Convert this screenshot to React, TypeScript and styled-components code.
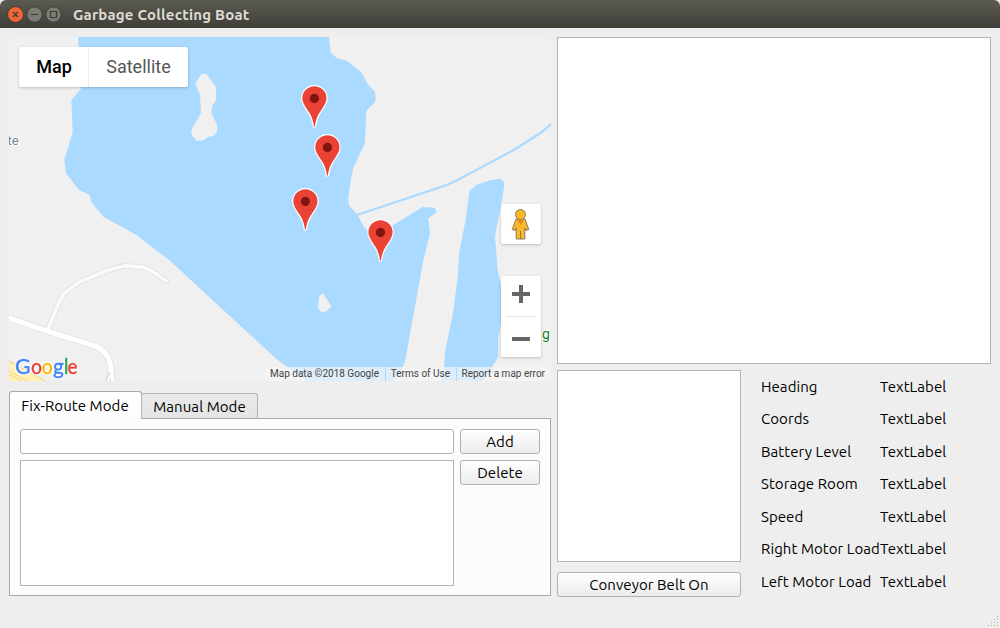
import React from 'react';
import styled, { createGlobalStyle } from 'styled-components';

const UI = '"Ubuntu", "Noto Sans", "Open Sans", sans-serif';

const Global = createGlobalStyle`
  * { box-sizing: border-box; }
  html, body { margin: 0; padding: 0; background: #eeeeee; }
  body { font-family: ${UI}; color: #000; overflow: hidden; }
`;

const Window = styled.div`
  position: relative;
  display: flex;
  flex-direction: column;
  width: 1000px;
  height: 628px;
  background: #eeeeee;
`;

const TitleBar = styled.header`
  flex: none;
  display: flex;
  align-items: center;
  height: 28px;
  padding-left: 7px;
  background: linear-gradient(#5b5a52, #3f3e39);
  border-radius: 6px 6px 0 0;
`;

const WindowButtons = styled.svg`
  display: block;
  width: 56px;
  height: 28px;
`;

const Title = styled.h1`
  margin: 0 0 0 10px;
  padding-top: 2px;
  font-size: 15px;
  line-height: 20px;
  font-weight: 700;
  letter-spacing: 0.2px;
  white-space: nowrap;
  color: #dfdbd2;
`;

const Body = styled.main`
  display: flex;
  gap: 6px;
  padding: 9px 9px 0;
`;

const LeftColumn = styled.section`
  width: 542px;
  display: flex;
  flex-direction: column;
`;

const RightColumn = styled.section`
  width: 434px;
  display: flex;
  flex-direction: column;
  gap: 6px;
`;

const MapFrame = styled.div`
  position: relative;
  width: 542px;
  height: 344px;
  overflow: hidden;
  font-family: Roboto, sans-serif;
`;

const MapDrawing = styled.svg`
  display: block;
  width: 542px;
  height: 344px;
`;

const MapTypes = styled.div`
  position: absolute;
  left: 10px;
  top: 10px;
  display: flex;
  height: 40px;
  background: #fff;
  border-radius: 2px;
  box-shadow: 0 1px 3px rgba(0, 0, 0, 0.22);
`;

const MapType = styled.button<{ $active?: boolean }>`
  width: ${(p) => (p.$active ? 69 : 100)}px;
  padding: ${(p) => (p.$active ? '0 0 1px 1px' : '0 0 1px')};
  border: 0;
  border-left: ${(p) => (p.$active ? '0' : '1px solid #ededed')};
  background: none;
  font: ${(p) => (p.$active ? 500 : 400)} 18px Roboto, sans-serif;
  color: ${(p) => (p.$active ? '#000' : '#565656')};
`;

const MapControls = styled.div`
  position: absolute;
  right: 10px;
  top: 167px;
  display: flex;
  flex-direction: column;
  gap: 32px;
`;

const ControlCard = styled.div<{ $height: number }>`
  width: 40px;
  height: ${(p) => p.$height}px;
  background: #fff;
  border-radius: 2px;
  box-shadow: 0 1px 3px rgba(0, 0, 0, 0.22);

  svg { display: block; }
`;

const Attribution = styled.div`
  position: absolute;
  right: 0;
  bottom: 0;
  display: flex;
  height: 14px;
  font-size: 10px;
  line-height: 14px;
  color: #444;
`;

const Credit = styled.span`
  padding: 0 6px 0 5px;
  background: rgba(245, 245, 245, 0.7);
  white-space: nowrap;

  & + & { margin-left: 1px; }
  &:nth-child(2) { padding: 0 5.5px 0 4.9px; }
`;

const TabBar = styled.div`
  position: relative;
  z-index: 1;
  display: flex;
  align-items: flex-end;
  height: 28px;
  margin: 10px 0 -1px;
`;

const Tab = styled.button<{ $active?: boolean }>`
  width: ${(p) => (p.$active ? 133 : 117)}px;
  height: ${(p) => (p.$active ? 28 : 26)}px;
  margin-left: ${(p) => (p.$active ? 0 : -1)}px;
  padding: ${(p) => (p.$active ? '1px 1px 0 0' : '2px 0 0')};
  border: 1px solid ${(p) => (p.$active ? '#a8a8a8' : '#b5b5b5')};
  border-bottom-color: ${(p) => (p.$active ? '#fcfcfc' : '#a8a8a8')};
  border-radius: 3px 3px 0 0;
  background: ${(p) => (p.$active ? 'linear-gradient(#fff, #fcfcfc)' : 'linear-gradient(#e9e9e9, #e4e4e4)')};
  font: 15px/22px ${UI};
  letter-spacing: 0.07px;
  white-space: nowrap;
  color: #000;
`;

const TabPanel = styled.div`
  display: flex;
  gap: 6px;
  height: 178px;
  padding: 10px 10px 9px;
  border: 1px solid #a8a8a8;
  background: #fcfcfc;
`;

const Stack = styled.div<{ $width: number; $gap?: number }>`
  flex: none;
  display: flex;
  flex-direction: column;
  gap: ${(p) => p.$gap ?? 6}px;
  width: ${(p) => p.$width}px;
`;

const RouteInput = styled.input`
  flex: none;
  height: 25px;
  border: 1px solid #b0b0b0;
  border-radius: 3px;
  background: #fff;
  outline: 0;
`;

const ListBox = styled.div<{ $height: number }>`
  flex: none;
  height: ${(p) => p.$height}px;
  border: 1px solid #b5b5b5;
  background: #fff;
`;

const PushButton = styled.button`
  height: 25px;
  padding: 1px 0 0;
  border: 1px solid #b0b0b0;
  border-radius: 3px;
  background: linear-gradient(#fefefe, #ececec);
  font: 15px/22px ${UI};
  letter-spacing: 0.06px;
  white-space: nowrap;
  color: #000;
`;

const StatusRow = styled.div`
  display: flex;
  gap: 20px;
`;

const StatusGrid = styled.dl`
  display: grid;
  grid-template-columns: 119px 80px;
  grid-auto-rows: 32.5px;
  margin: -0.25px 0 0;
  font-size: 15px;
  line-height: 33px;
  letter-spacing: 0.06px;
  white-space: nowrap;

  dd { margin: 0; }
`;

const SizeGrip = styled.svg`
  position: absolute;
  right: 1px;
  bottom: 1px;
  width: 12px;
  height: 12px;
`;

const LogoText = styled.g`
  font: 500 21px Lato, sans-serif;
  filter: drop-shadow(0 0 0.8px #fff) drop-shadow(0 0 0.8px #fff);
`;

const markers = [
  { x: 314.4, y: 98.4 },
  { x: 327.4, y: 147.4 },
  { x: 305.4, y: 201.4 },
  { x: 380.5, y: 232.4 },
];

const readings = [
  'Heading',
  'Coords',
  'Battery Level',
  'Storage Room',
  'Speed',
  'Right Motor Load',
  'Left Motor Load',
];

const logoLetters = [
  { letter: 'G', x: 15, width: 15.6, color: '#4285f4' },
  { letter: 'o', x: 31, width: 11, color: '#ea4335' },
  { letter: 'o', x: 41.8, width: 11, color: '#fbbc05' },
  { letter: 'g', x: 53, width: 10.8, color: '#4285f4' },
  { letter: 'l', x: 63.7, width: 4.8, color: '#34a853' },
  { letter: 'e', x: 67.4, width: 10, color: '#ea4335' },
];

const MAJOR = 'M5 316.5L46.7 331L95 346Q100 348 102.7 350.7Q108 356 110 362.7L112.5 384';
const MINOR = 'M47.7 330L57.3 306L63.7 293.7L79.3 282L108.3 270L124 266L143.3 267L153.3 272L166.3 281';

function Marker({ x, y }: { x: number; y: number }) {
  return (
    <g transform={`translate(${x} ${y})`}>
      <path
        d="M0-12.7C-7-12.7-12.7-7-12.7 0C-12.7 5.5-8.5 10-5.4 15C-2.6 19.5-1.6 23-1 28.6H1C1.6 23 2.6 19.5 5.4 15C8.5 10 12.7 5.5 12.7 0C12.7-7 7-12.7 0-12.7Z"
        fill="#ea4335"
        stroke="#fff"
        strokeWidth="1.2"
      />
      <circle r="4.6" fill="#811411" />
    </g>
  );
}

function LakeMap() {
  return (
    <MapDrawing viewBox="9 37 542 344">
      <rect x="9" y="37" width="542" height="344" fill="#f0f0f0" />
      <g fill="#aadaff">
        <path d="M78 37H329L331 52.7L336.7 58L346.7 60.7L361.3 72L367.7 84.3L375 91.7L375.7 98.3L374.7 102.3L366.3 111L365 143.3L353 168.7L350 185L348.3 198.3L349 205.5L357.3 214.3L364 227.3L367 229L372 238L393.3 225L422.7 207L434.7 207.7L436.7 212.3L428.3 218.3L430 234.3L423 261.7L405.7 358.3L401.7 370L394 381H306.7L287.3 367L276.7 359.3L168.3 259.3L150 245.7L136.7 235L103.3 216.7L91.7 202.7L89.7 195L78.7 189.7L66 173.3L64.3 160L72.7 132.3L71.3 100L81 88.7Z" />
        <path d="M469.3 191L476.7 184.7L490.7 180.3L500.7 179L504 182.3V188L495 236.7L497.7 270L504 300L501 323L498.3 338V356.7L492.3 366.7L483 381H441L444 366.7L445.3 350L453 313.3L457.7 276.7L459.3 251.7L466 218Z" />
      </g>
      <path d="M357 215L443.3 186.2Q450 184 456.7 180.5L515 149.3L540 133.3L552 123.5" fill="none" stroke="#aadaff" strokeWidth="2.3" />
      <g fill="#f0f0f0">
        <path d="M201.3 74L206.7 74.3L216 87.3V100L212.3 106L211.3 112.3L217 125L217.3 131.7L213.7 135.7L208 137L202.7 140.7L197 141L192.3 136L191 130.7L201 112.7L200 94.7L195.3 83.7Z" />
        <path d="M322.7 293L331.3 306.3L327 311L321.3 312.7L318 307.3L319.3 296.3Z" />
      </g>
      <g fill="none" strokeLinecap="round" strokeLinejoin="round">
        <path d={MINOR} stroke="#e0e0e0" strokeWidth="5.6" />
        <path d={MAJOR} stroke="#e0e0e0" strokeWidth="7" />
        <path d={MINOR} stroke="#fafafa" strokeWidth="3.8" />
        <path d={MAJOR} stroke="#fff" strokeWidth="5.2" />
        <path d="M106 381L109.5 373" stroke="#e0e0e0" strokeWidth="2" />
        <path d="M108.5 381L110.5 376" stroke="#fff" strokeWidth="2.4" />
        <path d="M110 381L110.6 378.5" stroke="#cfcfcf" strokeWidth="1" />
      </g>
      <path d="M9 360.5L46 381H9Z" fill="#fff0b3" />
      <path d="M9 361L46 381.5M9 371L27 381M9 374L21 381" fill="none" stroke="#f3d27e" strokeWidth="1" />
      <g fontFamily="Roboto, sans-serif" stroke="#fff" strokeWidth="2" paintOrder="stroke">
        <text x="7.4" y="145" fontSize="13.2" fill="#6b8390">te</text>
        <text x="542" y="339.3" fontSize="14" fill="#1b7d22">g</text>
      </g>
      {markers.map((m) => (
        <Marker key={`${m.x}-${m.y}`} {...m} />
      ))}
      <LogoText>
        {logoLetters.map((l) => (
          <text
            key={l.x}
            x={l.x}
            y="373.9"
            textLength={l.width}
            lengthAdjust="spacingAndGlyphs"
            fill={l.color}
            stroke={l.color}
            strokeWidth="0.3"
          >
            {l.letter}
          </text>
        ))}
      </LogoText>
    </MapDrawing>
  );
}

function Pegman() {
  return (
    <svg width="40" height="40" viewBox="0 0 40 40">
      <g fill="#fbb829" stroke="#8a7a5a" strokeWidth="1">
        <path d="M15 15H24L27.7 25.5L25 26.5L23.8 24V35H15.2V24L14 26.5L11.3 25.5Z" />
        <circle cx="19.5" cy="10.5" r="5" />
      </g>
      <path d="M16 15.5H23L19.5 21Z" fill="#e58423" />
      <path d="M19.5 27V35" stroke="#8a7a5a" strokeWidth="1" />
    </svg>
  );
}

export default function App() {
  return (
    <>
      <Global />
      <Window>
        <TitleBar>
          <WindowButtons viewBox="7 0 56 28">
            <g stroke="#33322d" strokeWidth="0.8">
              <circle cx="15.5" cy="14.5" r="7.9" fill="#ee6636" />
              <circle cx="34.5" cy="14.5" r="7.7" fill="#7b7a73" />
              <circle cx="53.5" cy="14.5" r="7.7" fill="#7b7a73" />
            </g>
            <path d="M13 12L18 17M18 12L13 17M31 14.5H38M50.5 11.5H56.5V17.5H50.5Z" fill="none" stroke="#3c3b36" strokeWidth="1.2" />
          </WindowButtons>
          <Title>Garbage Collecting Boat</Title>
        </TitleBar>
        <Body>
          <LeftColumn>
            <MapFrame>
              <LakeMap />
              <MapTypes>
                <MapType $active>Map</MapType>
                <MapType>Satellite</MapType>
              </MapTypes>
              <MapControls>
                <ControlCard $height={40}><Pegman /></ControlCard>
                <ControlCard $height={81}>
                  <svg width="40" height="81" viewBox="0 0 40 81">
                    <path d="M11 18H29M20 9V27M11 63H29" stroke="#666" strokeWidth="4" />
                    <path d="M5 40.5H35" stroke="#e6e6e6" />
                  </svg>
                </ControlCard>
              </MapControls>
              <Attribution>
                <Credit>Map data ©2018 Google</Credit>
                <Credit>Terms of Use</Credit>
                <Credit>Report a map error</Credit>
              </Attribution>
            </MapFrame>
            <TabBar>
              <Tab $active>Fix-Route Mode</Tab>
              <Tab>Manual Mode</Tab>
            </TabBar>
            <TabPanel>
              <Stack $width={434}>
                <RouteInput aria-label="Route" />
                <ListBox $height={126} />
              </Stack>
              <Stack $width={80}>
                <PushButton>Add</PushButton>
                <PushButton>Delete</PushButton>
              </Stack>
            </TabPanel>
          </LeftColumn>
          <RightColumn>
            <ListBox $height={327} />
            <StatusRow>
              <Stack $width={184} $gap={10}>
                <ListBox $height={192} />
                <PushButton>Conveyor Belt On</PushButton>
              </Stack>
              <StatusGrid>
                {readings.map((label) => (
                  <React.Fragment key={label}>
                    <dt>{label}</dt>
                    <dd>TextLabel</dd>
                  </React.Fragment>
                ))}
              </StatusGrid>
            </StatusRow>
          </RightColumn>
        </Body>
        <SizeGrip viewBox="0 0 12 12" shapeRendering="crispEdges">
          <path d="M10 1h1M7 4h1M10 4h1M4 7h1M7 7h1M10 7h1M1 10h1M4 10h1M7 10h1M10 10h1" transform="translate(0 .5)" stroke="#b0b0b0" />
        </SizeGrip>
      </Window>
    </>
  );
}
